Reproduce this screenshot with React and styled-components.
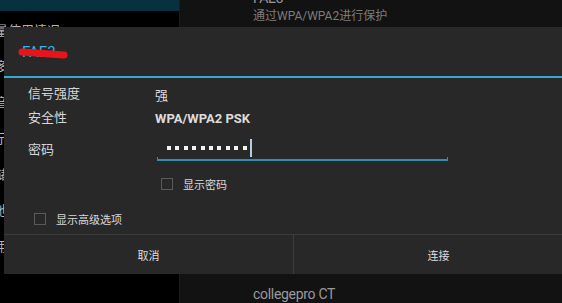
import React from "react";
import styled, { createGlobalStyle } from "styled-components";

const GlobalStyle = createGlobalStyle`
  html, body {
    margin: 0;
    padding: 0;
    background: #000;
    overflow: hidden;
  }
  * { box-sizing: border-box; }
`;

const CJK = `Roboto, "Noto Sans CJK SC", "Noto Sans", sans-serif`;

const navItems = [
  { label: "WLAN", active: true },
  { label: "流量使用情况" },
  { label: "更多…" },
  { label: "声音" },
  { label: "显示" },
  { label: "存储" },
  { label: "电池" },
  { label: "应用程序" },
];

const networks = [
  { name: "FAE3", info: "通过WPA/WPA2进行保护" },
  { name: "TP-LINK_5A2C", info: "通过WPA/WPA2进行保护" },
  { name: "ChinaNet", info: "已保存" },
  { name: "office", info: "通过WPA2进行保护" },
  { name: "collegepro CT", info: "开放" },
];

function App() {
  return (
    <>
      <GlobalStyle />
      <Screen>
        <NavColumn>
          {navItems.map((item) => (
            <NavItem key={item.label} $active={item.active}>
              {item.label}
            </NavItem>
          ))}
        </NavColumn>
        <WifiPane>
          {networks.map((n) => (
            <WifiItem key={n.name}>
              <WifiName>{n.name}</WifiName>
              <WifiInfo>{n.info}</WifiInfo>
            </WifiItem>
          ))}
        </WifiPane>

        <Dialog>
          <DialogTitle>
            FAE3
            <Scribble width="60" height="16" viewBox="0 0 60 16">
              <path d="M5 6 C 18 7, 34 8, 47 9" stroke="#e8141c" strokeWidth="7" strokeLinecap="round" fill="none" />
            </Scribble>
          </DialogTitle>
          <DialogBody>
            <InfoRow>
              <Label>信号强度</Label>
              <Value>强</Value>
            </InfoRow>
            <InfoRow>
              <Label>安全性</Label>
              <Value $bold>WPA/WPA2 PSK</Value>
            </InfoRow>
            <PasswordRow>
              <Label>密码</Label>
              <PasswordField>
                {Array.from({ length: 10 }).map((_, i) => (
                  <Dot key={i} />
                ))}
                <Cursor />
              </PasswordField>
            </PasswordRow>
            <CheckRow $indent={161} $height={28}>
              <CheckBox />
              <CheckLabel>显示密码</CheckLabel>
            </CheckRow>
            <CheckRow $indent={34} $top={11} $height={20}>
              <CheckBox />
              <CheckLabel>显示高级选项</CheckLabel>
            </CheckRow>
          </DialogBody>
          <ButtonBar>
            <DialogButton>取消</DialogButton>
            <DialogButton>连接</DialogButton>
          </ButtonBar>
        </Dialog>
      </Screen>
    </>
  );
}

export default App;

const Screen = styled.div`
  position: relative;
  width: 562px;
  height: 303px;
  overflow: hidden;
  display: flex;
  background: #000;
  font-family: ${CJK};
`;

const NavColumn = styled.div`
  width: 180px;
  flex-shrink: 0;
  margin-top: -25px;
  display: flex;
  flex-direction: column;
  background: #000;
  border-right: 1px solid #1c1c1c;
`;

const NavItem = styled.div`
  height: 36px;
  flex-shrink: 0;
  display: flex;
  align-items: center;
  padding-left: ${(p) => (p.$active ? "20px" : "0")};
  margin-left: ${(p) => (p.$active ? "0" : "-18px")};
  font-size: 13px;
  color: #b4b4b4;
  white-space: nowrap;
  background: ${(p) => (p.$active ? "#07313f" : "transparent")};
`;

const WifiPane = styled.div`
  flex: 1;
  margin-top: -20px;
  background: #121213;
  display: flex;
  flex-direction: column;
`;

const WifiItem = styled.div`
  height: 74px;
  flex-shrink: 0;
  padding: 8px 0 0 73px;
  display: flex;
  flex-direction: column;
`;

const WifiName = styled.div`
  font-size: 14px;
  letter-spacing: -0.3px;
  line-height: 20px;
  color: #9a9a9a;
`;

const WifiInfo = styled.div`
  font-size: 12px;
  line-height: 16px;
  color: #7c7c7c;
`;

const Dialog = styled.div`
  position: absolute;
  left: 4px;
  top: 27px;
  width: 579px;
  height: 247px;
  background: #282828;
  display: flex;
  flex-direction: column;
`;

const DialogTitle = styled.div`
  position: relative;
  height: 51px;
  flex-shrink: 0;
  padding: 0 0 0 18px;
  display: flex;
  align-items: center;
  font-size: 15px;
  color: #33b5e5;
  border-bottom: 2px solid #3aa6cc;
`;

const Scribble = styled.svg`
  position: absolute;
  left: 13px;
  top: 19px;
`;

const DialogBody = styled.div`
  flex: 1;
  padding: 4px 0 0 24px;
  display: flex;
  flex-direction: column;
`;

const InfoRow = styled.div`
  height: 24px;
  flex-shrink: 0;
  display: flex;
  align-items: center;
`;

const Label = styled.div`
  width: 127px;
  flex-shrink: 0;
  font-size: 13px;
  line-height: 20px;
  color: #d6d6d6;
`;

const Value = styled.div`
  font-size: 13px;
  font-weight: ${(p) => (p.$bold ? 700 : 400)};
  color: #dcdcdc;
`;

const PasswordRow = styled.div`
  height: 40px;
  flex-shrink: 0;
  padding-top: 10px;
  display: flex;
  align-items: flex-start;
`;

const PasswordField = styled.div`
  position: relative;
  width: 291px;
  height: 21px;
  margin-left: 2px;
  padding: 0 0 4px 10px;
  display: flex;
  align-items: center;
  gap: 4.4px;
  border-bottom: 2px solid #2f8fae;

  &::before,
  &::after {
    content: "";
    position: absolute;
    bottom: -2px;
    width: 1px;
    height: 4px;
    background: #2f8fae;
  }
  &::before { left: 0; }
  &::after { right: 0; }
`;

const Dot = styled.span`
  width: 4px;
  height: 4px;
  background: #f2f2f2;
  flex-shrink: 0;
`;

const Cursor = styled.span`
  width: 2px;
  height: 18px;
  margin-left: -1px;
  background: #b9cbe6;
`;

const CheckRow = styled.div`
  height: ${(p) => p.$height}px;
  flex-shrink: 0;
  margin-top: ${(p) => p.$top || 0}px;
  margin-left: ${(p) => p.$indent - 28}px;
  display: flex;
  align-items: center;
  gap: 10px;
`;

const CheckBox = styled.span`
  width: 12px;
  height: 12px;
  border: 1px solid #5a5a5a;
  flex-shrink: 0;
`;

const CheckLabel = styled.span`
  font-size: 11px;
  color: #d8d8d8;
`;

const ButtonBar = styled.div`
  height: 40px;
  flex-shrink: 0;
  display: flex;
  border-top: 1px solid #3c3c3c;
`;

const DialogButton = styled.div`
  flex: 1;
  display: flex;
  align-items: center;
  justify-content: center;
  font-size: 11px;
  color: #dedede;

  & + & {
    border-left: 1px solid #3c3c3c;
  }
`;
